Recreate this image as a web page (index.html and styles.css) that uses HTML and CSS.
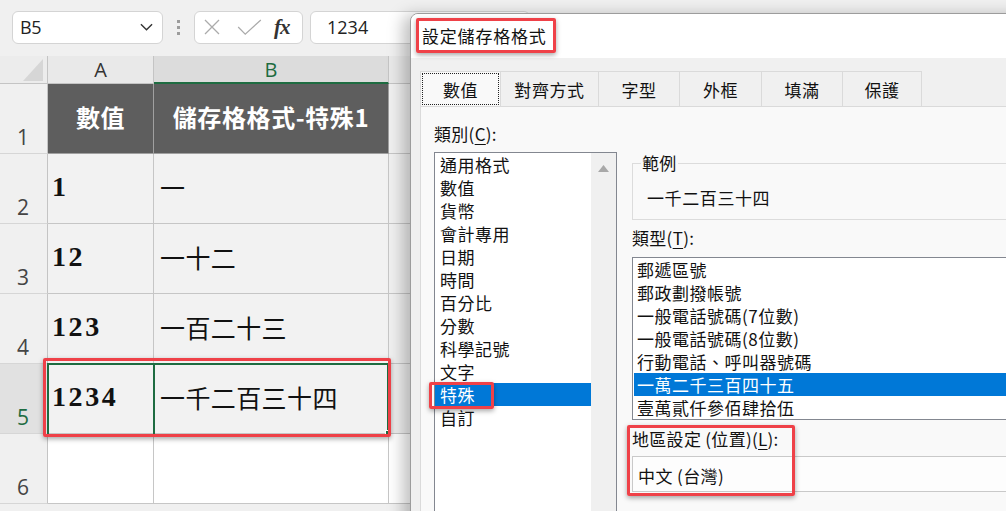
FILE: index.html
```html
<!DOCTYPE html>
<html lang="zh-Hant">
<head>
<meta charset="utf-8">
<title>設定儲存格格式</title>
<link rel="stylesheet" href="styles.css">
</head>
<body>
<div class="app">
  <header class="fbar">
    <div class="namebox">
      <span>B5</span>
      <svg class="chev" viewBox="0 0 14 8" width="13" height="8"><path d="M1 1l6 6 6-6" fill="none" stroke="#333" stroke-width="1.5"/></svg>
    </div>
    <div class="grip"><i></i><i></i><i></i></div>
    <div class="fxbox">
      <svg viewBox="0 0 16 16" width="16" height="16"><path d="M1 1L15 15M15 1L1 15" stroke="#ababab" stroke-width="1.3"/></svg>
      <svg class="check" viewBox="0 0 26 18" width="25" height="17"><path d="M1 8.5l7.5 7.5L25 1" fill="none" stroke="#ababab" stroke-width="1.3"/></svg>
      <span class="fx">fx</span>
    </div>
    <div class="formula">1234</div>
  </header>

  <div class="sheet">
    <div class="corner"><svg viewBox="0 0 20 22" width="20" height="22"><polygon points="20,0 20,22 0,22" fill="#d6d6d6"/></svg></div>
    <div class="colh">A</div>
    <div class="colh colh-sel">B</div>
    <div class="colh colh-rest"></div>

    <div class="rowh"><span>1</span></div>
    <div class="cell hdr">數值</div>
    <div class="cell hdr">儲存格格式-特殊1</div>
    <div class="cell rest"></div>

    <div class="rowh"><span>2</span></div>
    <div class="cell num">1</div>
    <div class="cell cn">一</div>
    <div class="cell rest"></div>

    <div class="rowh"><span>3</span></div>
    <div class="cell num">12</div>
    <div class="cell cn">一十二</div>
    <div class="cell rest"></div>

    <div class="rowh"><span>4</span></div>
    <div class="cell num">123</div>
    <div class="cell cn">一百二十三</div>
    <div class="cell rest"></div>

    <div class="rowh rowh-sel"><span>5</span></div>
    <div class="cell num">1234</div>
    <div class="cell cn">一千二百三十四</div>
    <div class="cell rest"></div>

    <div class="rowh"><span>6</span></div>
    <div class="cell blank"></div>
    <div class="cell blank"></div>
    <div class="cell rest blank"></div>
  </div>

  <div class="selection"></div>
  <div class="handle"></div>
  <div class="mark mark-row"></div>

  <section class="dialog">
    <div class="dtitle">設定儲存格格式</div>
    <div class="dbody">
      <nav class="tabs">
        <div class="tab tab-on w1"><span>數值</span></div>
        <div class="tab w2">對齊方式</div>
        <div class="tab w3">字型</div>
        <div class="tab w4">外框</div>
        <div class="tab w5">填滿</div>
        <div class="tab w6">保護</div>
      </nav>
      <div class="panel">
        <div class="leftcol">
          <div class="lbl">類別(<u>C</u>):</div>
          <div class="catlist">
            <ul class="items">
              <li>通用格式</li>
              <li>數值</li>
              <li>貨幣</li>
              <li>會計專用</li>
              <li>日期</li>
              <li>時間</li>
              <li>百分比</li>
              <li>分數</li>
              <li>科學記號</li>
              <li>文字</li>
              <li class="on">特殊</li>
              <li>自訂</li>
            </ul>
            <div class="vscroll"><svg viewBox="0 0 11 7" width="11" height="7"><polygon points="0,7 5.5,0 11,7" fill="#a8a8a8"/></svg></div>
          </div>
        </div>
        <div class="rightcol">
          <fieldset class="sample">
            <legend>範例</legend>
            <div class="sample-val">一千二百三十四</div>
          </fieldset>
          <div class="lbl lbl-type">類型(<u>T</u>):</div>
          <ul class="typelist">
            <li>郵遞區號</li>
            <li>郵政劃撥帳號</li>
            <li>一般電話號碼(7位數)</li>
            <li>一般電話號碼(8位數)</li>
            <li>行動電話、呼叫器號碼</li>
            <li class="on">一萬二千三百四十五</li>
            <li>壹萬貳仟參佰肆拾伍</li>
          </ul>
          <div class="lbl lbl-loc">地區設定 (位置)(<u>L</u>):</div>
          <div class="combo">中文 (台灣)</div>
        </div>
      </div>
    </div>
  </section>

  <div class="mark mark-title"></div>
  <div class="mark mark-cat"></div>
  <div class="mark mark-loc"></div>
</div>
</body>
</html>
```

FILE: styles.css
```css
* { box-sizing: border-box; }
html, body { margin: 0; padding: 0; }
body {
  background: #f0f0f0;
  font-family: "Noto Sans CJK TC", "Noto Sans", sans-serif;
}
.app {
  position: relative;
  width: 1006px;
  height: 511px;
  overflow: hidden;
  background: #f0f0f0;
}

/* ---------- formula bar ---------- */
.fbar {
  display: flex;
  align-items: center;
  height: 56px;
  padding-left: 12px;
  padding-bottom: 2px;
  background: #f0f0f0;
}
.namebox {
  width: 151px;
  height: 33px;
  background: #fff;
  border: 1px solid #d4d4d4;
  border-radius: 6px;
  display: flex;
  align-items: center;
  justify-content: space-between;
  padding: 0 9px 0 7px;
  font-family: "Open Sans", "Liberation Sans", sans-serif;
  font-size: 18px;
  letter-spacing: -0.5px;
  color: #222;
}
.grip {
  width: 31px;
  display: flex;
  flex-direction: column;
  align-items: center;
  gap: 3px;
}
.grip i {
  display: block;
  width: 3px;
  height: 3px;
  background: #9c9c9c;
}
.fxbox {
  width: 109px;
  height: 33px;
  background: #fff;
  border: 1px solid #d4d4d4;
  border-radius: 6px;
  display: flex;
  align-items: center;
  padding-left: 9px;
}
.fxbox .check { margin-left: 17px; }
.fx {
  margin-left: 12px;
  font-family: "Liberation Serif", serif;
  font-style: italic;
  font-weight: bold;
  font-size: 21px;
  color: #333;
  letter-spacing: -1px;
}
.formula {
  margin-left: 7px;
  width: 220px;
  height: 33px;
  background: #fff;
  border: 1px solid #d4d4d4;
  border-radius: 6px;
  padding-left: 16px;
  font-family: "Open Sans", "Liberation Sans", sans-serif;
  font-size: 18px;
  line-height: 31px;
  color: #222;
}

/* ---------- sheet ---------- */
.sheet {
  display: grid;
  grid-template-columns: 48px 106px 235px 1fr;
  grid-template-rows: 28px repeat(6, 70px);
}
.corner {
  background: #ececec;
  border-right: 1px solid #c4c4c4;
  border-bottom: 1px solid #c4c4c4;
  display: flex;
  align-items: flex-end;
  justify-content: flex-end;
  padding: 0 4px 2px 0;
}
.colh {
  background: #e9e9e9;
  border-right: 1px solid #c4c4c4;
  border-bottom: 1px solid #c4c4c4;
  font-family: "Open Sans", "Liberation Sans", sans-serif;
  font-size: 20px;
  line-height: 27px;
  color: #333;
  text-align: center;
}
.colh-sel {
  background: #dcdcdc;
  color: #1e6c41;
  border-bottom: 2px solid #1e6c41;
}
.colh-rest { border-right: 0; }
.rowh {
  background: #f0f0f0;
  border-right: 1px solid #c4c4c4;
  border-bottom: 1px solid #d6d6d6;
  display: flex;
  align-items: flex-end;
  padding: 0 0 5px 17px;
  font-family: "Open Sans", "Liberation Sans", sans-serif;
  font-size: 21px;
  line-height: 1;
  color: #444;
}
.rowh-sel {
  background: #e1e1e1;
  color: #1e6c41;
}
.cell {
  background: #f2f2f2;
  border-right: 1px solid #c6c6c6;
  border-bottom: 1px solid #c6c6c6;
  display: flex;
  align-items: center;
  padding-bottom: 4px;
  white-space: nowrap;
}
.hdr {
  background: #5e5e5e;
  border-right-color: #a0a0a0;
  border-bottom-color: #a0a0a0;
  justify-content: center;
  color: #fff;
  font-weight: bold;
  font-size: 24px;
  letter-spacing: 0.6px;
  padding-bottom: 4px;
}
.num {
  font-family: "Liberation Serif", serif;
  font-weight: bold;
  font-size: 28px;
  letter-spacing: 2.6px;
  color: #111;
  padding-left: 4px;
}
.cn {
  font-size: 25px;
  color: #111;
  padding-left: 6px;
  letter-spacing: 0.4px;
}
.rest {
  background: #f0f0f0;
  border-right: 0;
}
.blank { background: #fff; }

/* overlays on the sheet */
.selection {
  position: absolute;
  left: 47px;
  top: 363px;
  width: 342px;
  height: 72px;
  border: 2px solid #1e6c41;
  border-bottom-width: 1px;
}
.selection::after {
  content: "";
  position: absolute;
  left: 104px;
  top: 0;
  bottom: 0;
  width: 2px;
  background: #1e6c41;
}
.handle {
  position: absolute;
  left: 385px;
  top: 430px;
  width: 6px;
  height: 6px;
  background: #1e6c41;
  border: 1px solid #fff;
}
.mark {
  position: absolute;
  border: 3px solid #ef4148;
  border-radius: 2px;
  box-shadow: 0 2px 5px rgba(0, 0, 0, 0.35);
}
.mark-row { left: 43px; top: 358px; width: 348px; height: 79px; }
.mark-title { left: 416px; top: 18px; width: 140px; height: 35px; }
.mark-cat { left: 429px; top: 382px; width: 65px; height: 27px; }
.mark-loc { left: 627px; top: 425px; width: 168px; height: 71px; }

/* ---------- dialog ---------- */
.dialog {
  position: absolute;
  left: 410px;
  top: 13px;
  width: 620px;
  height: 520px;
  background: #f0f0f0;
  border: 1px solid #9c9c9c;
  border-top-left-radius: 8px;
  box-shadow: -7px 2px 16px rgba(0, 0, 0, 0.25);
  overflow: hidden;
  color: #111;
}
.dtitle {
  height: 44px;
  background: #fff;
  padding-left: 11px;
  font-size: 17px;
  letter-spacing: 0.8px;
  line-height: 44px;
}
.dbody {
  padding: 13px 0 0 9px;
}
.tabs {
  display: flex;
  height: 35px;
}
.tab {
  height: 35px;
  background: #f0f0f0;
  border: 1px solid #dadada;
  border-left: 0;
  border-bottom: 0;
  display: flex;
  align-items: center;
  justify-content: center;
  font-size: 17px;
  letter-spacing: 0.6px;
}
.tab-on {
  background: #f9f9f9;
  border-left: 1px solid #dadada;
  padding: 1px;
}
.tab-on span {
  flex: 1;
  align-self: stretch;
  display: flex;
  align-items: center;
  justify-content: center;
  border: 1px dotted #222;
}
.w1 { width: 81px; }
.w2 { width: 98px; }
.w3 { width: 81px; }
.w4 { width: 82px; }
.w5 { width: 81px; }
.w6 { width: 79px; }

.panel {
  display: flex;
  gap: 15px;
  height: 420px;
  background: #f9f9f9;
  border-top: 1px solid #dadada;
  border-left: 1px solid #dadada;
  padding-left: 13px;
}
.lbl {
  font-size: 17px;
  line-height: 22px;
  letter-spacing: 0.3px;
}
.lbl u { text-underline-offset: 3px; }
.leftcol {
  width: 183px;
  padding-top: 16px;
}
.catlist {
  margin-top: 7px;
  height: 400px;
  background: #fff;
  border: 1px solid #838790;
  display: flex;
}
.items, .typelist {
  list-style: none;
  margin: 0;
  padding: 0;
}
.items { flex: 1; }
.items li {
  font-size: 17px;
  letter-spacing: 0.5px;
  line-height: 23px;
  height: 23px;
  padding-left: 5px;
  white-space: nowrap;
}
.items li.on, .typelist li.on {
  background: #0078d7;
  color: #fff;
}
.vscroll {
  width: 25px;
  background: #f0f0f0;
  display: flex;
  justify-content: center;
  align-items: flex-start;
  padding-top: 12px;
}

.rightcol {
  flex: 1;
  padding-top: 45px;
}
.sample {
  margin: 0;
  min-width: 0;
  border: 1px solid #dcdcdc;
  border-right: 0;
  padding: 12px 0 9px 14px;
}
.sample legend {
  margin-left: -6px;
  padding: 0 1px;
  font-size: 17px;
  line-height: 22px;
  letter-spacing: 0.3px;
}
.sample-val {
  font-size: 17px;
  letter-spacing: 0.6px;
  line-height: 24px;
}
.lbl-type { margin-top: 7px; }
.typelist {
  margin-top: 8px;
  background: #fff;
  border: 1px solid #838790;
  border-right: 0;
  padding: 0 0 0 1px;
}
.typelist li {
  font-size: 17px;
  letter-spacing: 0.5px;
  line-height: 23px;
  height: 23px;
  padding-left: 3px;
  white-space: nowrap;
}
.lbl-loc { margin-top: 8px; }
.combo {
  margin-top: 6px;
  height: 36px;
  background: #fdfdfd;
  border: 1px solid #c9c9c9;
  border-right: 0;
  padding: 5px 0 0 5px;
  font-size: 17px;
  line-height: 28px;
  letter-spacing: 0.4px;
}
```
